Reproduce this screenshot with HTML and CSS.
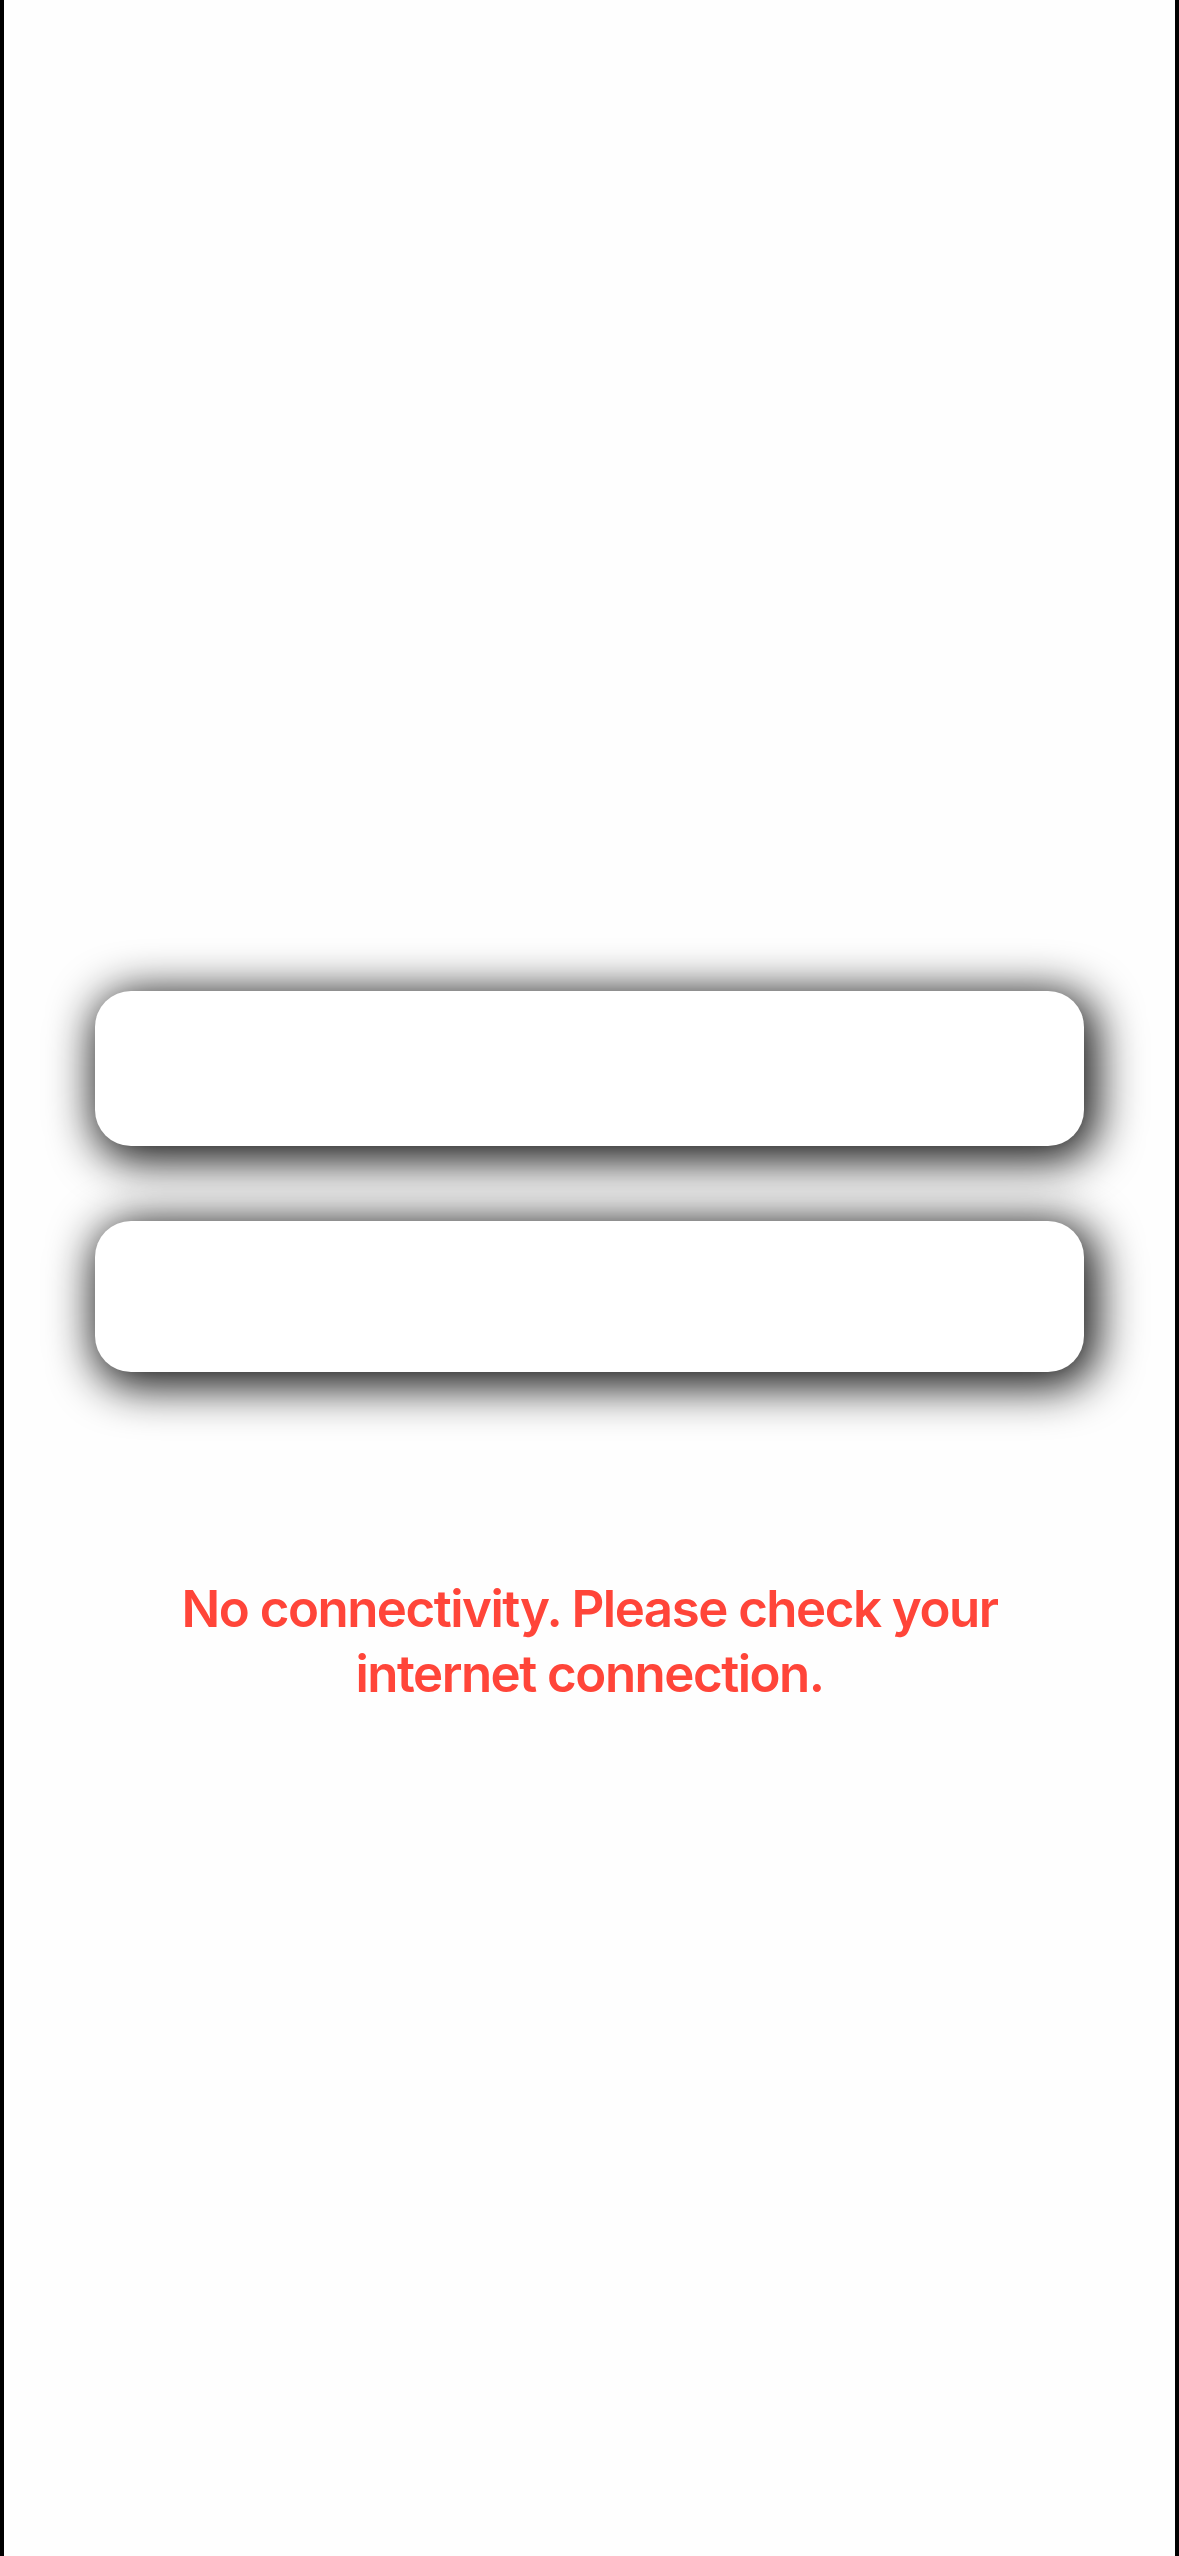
FILE: index.html
```html
<!DOCTYPE html>
<html lang="en">
<head>
<meta charset="utf-8">
<title>No connectivity</title>
<link rel="stylesheet" href="styles.css">
</head>
<body>
<div class="screen">
  <div class="fields">
    <div class="card card-top"></div>
    <div class="card card-bottom"></div>
  </div>
  <p class="error">No connectivity. Please check your<br>internet connection.</p>
</div>
</body>
</html>
```

FILE: styles.css
```css
html, body {
  margin: 0;
  padding: 0;
  background: #ffffff;
}
.screen {
  box-sizing: border-box;
  width: 1179px;
  height: 2556px;
  border-left: 4px solid #000;
  border-right: 4px solid #000;
  background: #fefefe;
  padding-top: 991px;
  overflow: hidden;
}
.fields {
  display: flex;
  flex-direction: column;
  gap: 75px;
  padding-left: 91px;
}
.card {
  width: 989px;
  background: #ffffff;
  border-radius: 36px;
  box-shadow: 6px 8px 46px 6px rgba(0, 0, 0, 0.95);
}
.card-top {
  height: 155px;
}
.card-bottom {
  height: 151px;
}
.error {
  margin: 204px 0 0 0;
  text-align: center;
  font-family: Inter, "Noto Sans", sans-serif;
  font-weight: 600;
  font-size: 51px;
  line-height: 65px;
  letter-spacing: -1.5px;
  color: #ff4539;
}
```
